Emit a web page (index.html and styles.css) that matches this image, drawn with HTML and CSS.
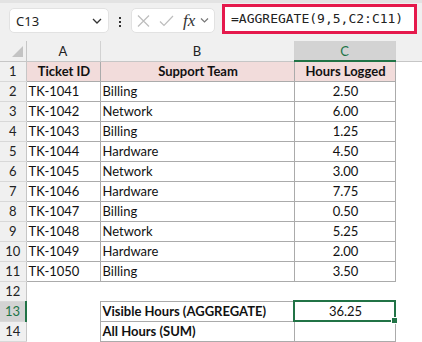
FILE: index.html
```html
<!DOCTYPE html>
<html>
<head>
    <title>Hours Sheet</title>
    <link rel="stylesheet" href="styles.css">
</head>
<body>
    <!-- Formula bar -->
    <div class="toolbar">
        <div class="name-box">
            <span>C13</span>
            <svg width="10" height="6" viewBox="0 0 10 6"><path d="M1 1 L5 5 L9 1" fill="none" stroke="#333" stroke-width="1.3"/></svg>
        </div>
        <div class="dots"><i></i><i></i><i></i></div>
        <div class="fx-box">
            <svg width="13" height="12" viewBox="0 0 13 12"><path d="M1 0.5 L12 11.5 M12 0.5 L1 11.5" stroke="#bdbdbd" stroke-width="1.2"/></svg>
            <svg width="15" height="12" viewBox="0 0 15 12"><path d="M1 6.5 L5 10.5 L14 1" fill="none" stroke="#bdbdbd" stroke-width="1.2"/></svg>
            <span class="fx">fx</span>
            <svg width="9" height="5" viewBox="0 0 9 5"><path d="M1 0.5 L4.5 4 L8 0.5" fill="none" stroke="#777" stroke-width="1.2"/></svg>
        </div>
        <div class="formula">=AGGREGATE(9,5,C2:C11)</div>
    </div>

    <!-- Sheet -->
    <table class="sheet">
        <colgroup>
            <col style="width: 26px">
            <col style="width: 74px">
            <col style="width: 194px">
            <col style="width: 101px">
            <col style="width: 27px">
        </colgroup>
        <thead>
            <tr>
                <th class="corner"><span class="tri"></span></th>
                <th class="colhead">A</th>
                <th class="colhead">B</th>
                <th class="colhead active">C</th>
                <th class="colhead last"></th>
            </tr>
        </thead>
        <tbody id="sheetBody">
            <tr>
                <td class="rowhead">1</td>
                <td class="cell head">Ticket ID</td>
                <td class="cell head">Support Team</td>
                <td class="cell head">Hours Logged</td>
                <td></td>
            </tr>
        </tbody>
    </table>

    <script>
        // Ticket rows
        const tickets = [
            ['TK-1041', 'Billing', '2.50'],
            ['TK-1042', 'Network', '6.00'],
            ['TK-1043', 'Billing', '1.25'],
            ['TK-1044', 'Hardware', '4.50'],
            ['TK-1045', 'Network', '3.00'],
            ['TK-1046', 'Hardware', '7.75'],
            ['TK-1047', 'Billing', '0.50'],
            ['TK-1048', 'Network', '5.25'],
            ['TK-1049', 'Hardware', '2.00'],
            ['TK-1050', 'Billing', '3.50']
        ];

        const body = document.getElementById('sheetBody');
        let html = '';
        tickets.forEach((t, i) => {
            html += `
                <tr>
                    <td class="rowhead">${i + 2}</td>
                    <td class="cell">${t[0]}</td>
                    <td class="cell">${t[1]}</td>
                    <td class="cell num">${t[2]}</td>
                    <td></td>
                </tr>`;
        });
        html += `
            <tr><td class="rowhead">12</td><td></td><td></td><td></td><td></td></tr>
            <tr>
                <td class="rowhead active">13</td>
                <td></td>
                <td class="cell bold">Visible Hours (AGGREGATE)</td>
                <td class="cell num selected">36.25<span class="handle"></span></td>
                <td></td>
            </tr>
            <tr>
                <td class="rowhead">14</td>
                <td></td>
                <td class="cell bold">All Hours (SUM)</td>
                <td class="cell num"></td>
                <td></td>
            </tr>`;
        body.innerHTML += html;
    </script>
</body>
</html>
```

FILE: styles.css
```css
body {
    margin: 0;
    width: 422px;
    height: 342px;
    overflow: hidden;
    background: white;
    font-family: Lato, "Liberation Sans", sans-serif;
}
.toolbar {
    height: 38px;
    border-top: 3px solid #e3e3e3;
    background: #f0f0f0;
    display: flex;
    align-items: flex-start;
    padding-left: 9px;
}
.name-box {
    width: 100px;
    height: 25px;
    margin-top: 5px;
    box-sizing: border-box;
    background: white;
    border: 1px solid #e2e2e2;
    border-radius: 5px;
    display: flex;
    align-items: center;
    justify-content: space-between;
    padding: 0 6px 0 6px;
    font-family: "Noto Sans", "Liberation Sans", sans-serif;
    font-size: 13px;
    color: #222;
}
.dots {
    width: 22px;
    margin-top: 14px;
    display: flex;
    flex-direction: column;
    align-items: center;
    gap: 2px;
}
.dots i {
    width: 2px;
    height: 2px;
    background: #333;
}
.fx-box {
    width: 84px;
    height: 25px;
    margin-top: 5px;
    box-sizing: border-box;
    background: white;
    border: 1px solid #e2e2e2;
    border-radius: 5px;
    display: flex;
    align-items: center;
    padding-left: 5px;
    gap: 9px;
}
.fx {
    font-family: "Liberation Serif", serif;
    font-style: italic;
    font-size: 17px;
    color: #333;
    margin-left: 0;
    margin-right: -4px;
    line-height: 1;
}
.formula {
    margin-left: 7px;
    margin-top: 1px;
    width: 195px;
    height: 30px;
    box-sizing: border-box;
    border: 3px solid #e5194c;
    background: white;
    padding-left: 6px;
    font-family: "DejaVu Sans Mono", monospace;
    font-size: 13px;
    line-height: 24px;
    color: #222;
    white-space: nowrap;
}
.sheet {
    border-collapse: collapse;
    table-layout: fixed;
    width: 422px;
    font-size: 13px;
    color: #111;
}
.sheet tr {
    height: 20px;
}
.sheet th,
.sheet td {
    padding: 0;
    white-space: nowrap;
    overflow: hidden;
}
.corner {
    background: #f0f0f0;
    border-right: 1px solid #c6c6c6;
    border-bottom: 1px solid #c6c6c6;
    position: relative;
}
.tri {
    position: absolute;
    right: 3px;
    bottom: 4px;
    width: 0;
    height: 0;
    border-left: 11px solid transparent;
    border-bottom: 11px solid #c3c3c3;
}
.colhead {
    background: #f0f0f0;
    font-weight: normal;
    color: #222;
    border-right: 1px solid #d2d2d2;
    border-bottom: 1px solid #c6c6c6;
}
.colhead.last {
    border-right: none;
}
.colhead.active {
    background: #d3d3d3;
    color: #217346;
    border-bottom: 2px solid #217346;
}
.rowhead {
    background: #f0f0f0;
    text-align: center;
    color: #222;
    border-right: 1px solid #c6c6c6;
    border-bottom: 1px solid #d8d8d8;
}
.rowhead.active {
    background: #d3d3d3;
    color: #217346;
    border-right: 2px solid #217346;
}
.cell {
    border: 1px solid #ababab;
    padding-left: 2px !important;
}
.cell.head {
    background: #f2dcdb;
    font-weight: bold;
    text-align: center;
}
.cell.num {
    text-align: center;
}
.cell.bold {
    font-weight: bold;
}
.cell.selected {
    border: 2px solid #217346;
    position: relative;
    overflow: visible;
}
.handle {
    position: absolute;
    right: -4px;
    bottom: -4px;
    width: 5px;
    height: 5px;
    background: #217346;
    border: 1px solid white;
}
```
